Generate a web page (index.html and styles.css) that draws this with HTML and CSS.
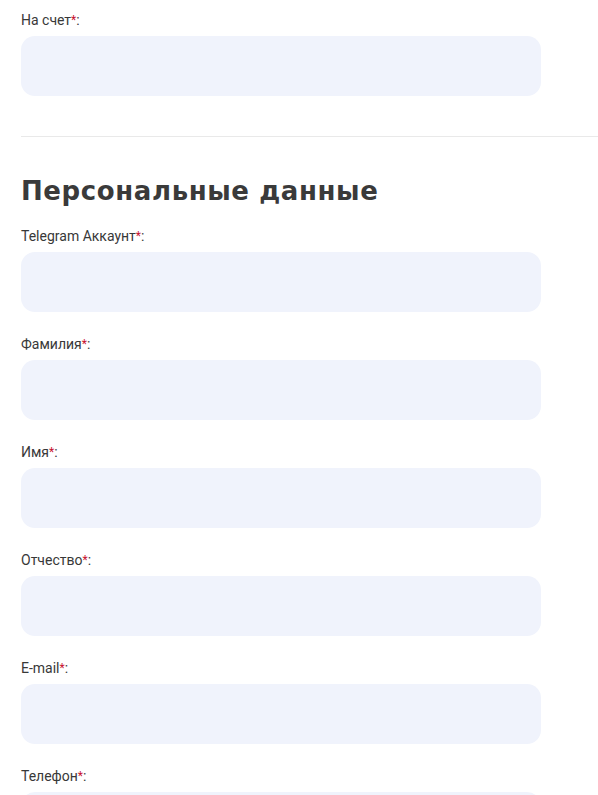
FILE: index.html
```html
<!DOCTYPE html>
<html lang="ru">
<head>
<meta charset="utf-8">
<link rel="stylesheet" href="styles.css">
</head>
<body>
<div class="page">
  <div class="field">
    <label class="label">На счет<span class="req">*</span>:</label>
    <div class="input"></div>
  </div>
  <hr class="divider">
  <h2 class="title">Персональные данные</h2>
  <div class="field">
    <label class="label">Telegram Аккаунт<span class="req">*</span>:</label>
    <div class="input"></div>
  </div>
  <div class="field">
    <label class="label">Фамилия<span class="req">*</span>:</label>
    <div class="input"></div>
  </div>
  <div class="field">
    <label class="label">Имя<span class="req">*</span>:</label>
    <div class="input"></div>
  </div>
  <div class="field">
    <label class="label">Отчество<span class="req">*</span>:</label>
    <div class="input"></div>
  </div>
  <div class="field">
    <label class="label">E-mail<span class="req">*</span>:</label>
    <div class="input"></div>
  </div>
  <div class="field">
    <label class="label">Телефон<span class="req">*</span>:</label>
    <div class="input"></div>
  </div>
</div>
</body>
</html>
```
FILE: styles.css
```css
html, body { margin: 0; padding: 0; background: #fff; }
.page {
  padding: 12px 0 0 21px;
  font-family: Roboto, "Liberation Sans", sans-serif;
  color: #333;
  overflow: hidden;
  height: 795px;
  box-sizing: border-box;
}
.field { display: flex; flex-direction: column; gap: 8px; margin-bottom: 24px; width: 520px; }
.label { display: block; font-size: 14px; line-height: 16px; color: #383838; }
.req { color: #c8102e; font-size: 12px; vertical-align: 1px; }
.input { height: 60px; border-radius: 14px; background: #f0f3fc; }
.divider { border: 0; border-top: 1px solid #e9e9e9; margin: 40px 0 0 0; }
.title {
  margin: 39px 0 22px 0;
  font-family: "DejaVu Sans", sans-serif;
  font-weight: 800;
  font-size: 26px;
  line-height: 30px;
  letter-spacing: 0.6px;
  color: #3a3a3a;
}
```
